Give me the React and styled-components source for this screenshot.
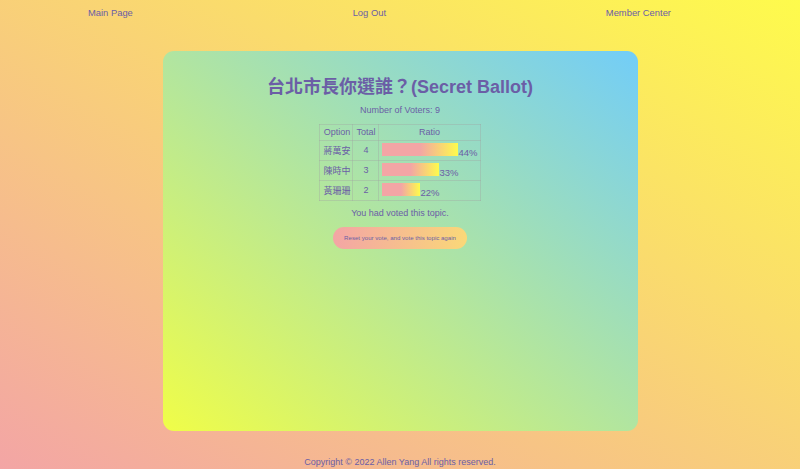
import React from "react";
import styled, { createGlobalStyle } from "styled-components";

const results = [
  { name: "蔣萬安", total: 4 },
  { name: "陳時中", total: 3 },
  { name: "黃珊珊", total: 2 },
];
const voters = 9;

const GlobalStyle = createGlobalStyle`
  html, body {
    margin: 0;
    padding: 0;
    height: 100%;
  }
  body {
    font-family: "Liberation Sans", Arial, Helvetica, sans-serif;
    color: #6b5ea6;
    background: linear-gradient(to top right, #f3a5a5, #fefb4c);
    min-height: 469px;
    overflow: hidden;
  }
`;

const Nav = styled.nav`
  display: flex;
  justify-content: space-between;
  box-sizing: border-box;
  height: 51px;
  padding: 7px 129px 0 88px;
`;

const NavLink = styled.a`
  font-size: 9.4px;
  line-height: 11px;
  color: #6b5ea6;
  text-decoration: none;
  cursor: pointer;
`;

const Card = styled.main`
  box-sizing: border-box;
  width: 475px;
  height: 380px;
  margin: 0 auto;
  padding-top: 26px;
  border-radius: 11px;
  background: linear-gradient(to top right, #f0fd48, #72cdf8);
  display: flex;
  flex-direction: column;
  align-items: center;
`;

const Title = styled.h1`
  margin: 0;
  font-size: 18px;
  line-height: 21px;
  font-weight: bold;
  font-family: "Liberation Sans", "Noto Sans CJK TC", Arial, sans-serif;
`;

const Info = styled.p`
  margin: ${(p) => p.$top || 0}px 0 0;
  font-size: 9px;
  line-height: 11px;
`;

const Table = styled.table`
  margin-top: 7.5px;
  border-collapse: collapse;
  border: 1px solid rgba(160, 160, 160, 0.45);
  font-size: 9px;
  font-family: "Liberation Sans", "Noto Sans CJK TC", Arial, sans-serif;
`;

const Th = styled.th`
  font-weight: normal;
  padding: 2px 2px 2px 3px;
  height: 11px;
  border: 1px solid rgba(160, 160, 160, 0.35);
  text-align: center;
`;

const Td = styled.td`
  padding: 1px 2px 1px 3px;
  height: 17px;
  border: 1px solid rgba(160, 160, 160, 0.35);
  text-align: ${(p) => p.$align || "center"};
  white-space: nowrap;
`;

const Bar = styled.span`
  display: inline-block;
  height: 13px;
  margin-right: 1px;
  background: linear-gradient(to right, #f3a5a5 50%, #fdfb4c);
`;

const Percent = styled.span`
  font-size: 9.5px;
`;

const ResetButton = styled.button`
  margin-top: 7.5px;
  width: 134px;
  height: 22px;
  border: none;
  border-radius: 11px;
  background: linear-gradient(to right, #f3a5a5, #fad878);
  color: #6b5ea6;
  font-family: "Liberation Sans", Arial, sans-serif;
  font-size: 6.1px;
  padding: 0;
  cursor: pointer;
`;

const Footer = styled.footer`
  margin-top: 26px;
  text-align: center;
  font-size: 9px;
  line-height: 11px;
`;

export default function App() {
  return (
    <>
      <GlobalStyle />
      <Nav>
        <NavLink>Main Page</NavLink>
        <NavLink>Log Out</NavLink>
        <NavLink>Member Center</NavLink>
      </Nav>
      <Card>
        <Title>台北市長你選誰？(Secret Ballot)</Title>
        <Info $top={7}>Number of Voters: {voters}</Info>
        <Table>
          <thead>
            <tr>
              <Th>Option</Th>
              <Th>Total</Th>
              <Th>Ratio</Th>
            </tr>
          </thead>
          <tbody>
            {results.map((r) => {
              const ratio = r.total / voters;
              return (
                <tr key={r.name}>
                  <Td>{r.name}</Td>
                  <Td>{r.total}</Td>
                  <Td $align="left">
                    <Bar style={{ width: `${Math.round(ratio * 170)}px` }} />
                    <Percent>{Math.floor(ratio * 100)}%</Percent>
                  </Td>
                </tr>
              );
            })}
          </tbody>
        </Table>
        <Info $top={7.5}>You had voted this topic.</Info>
        <ResetButton>Reset your vote, and vote this topic again</ResetButton>
      </Card>
      <Footer>Copyright © 2022 Allen Yang All rights reserved.</Footer>
    </>
  );
}
